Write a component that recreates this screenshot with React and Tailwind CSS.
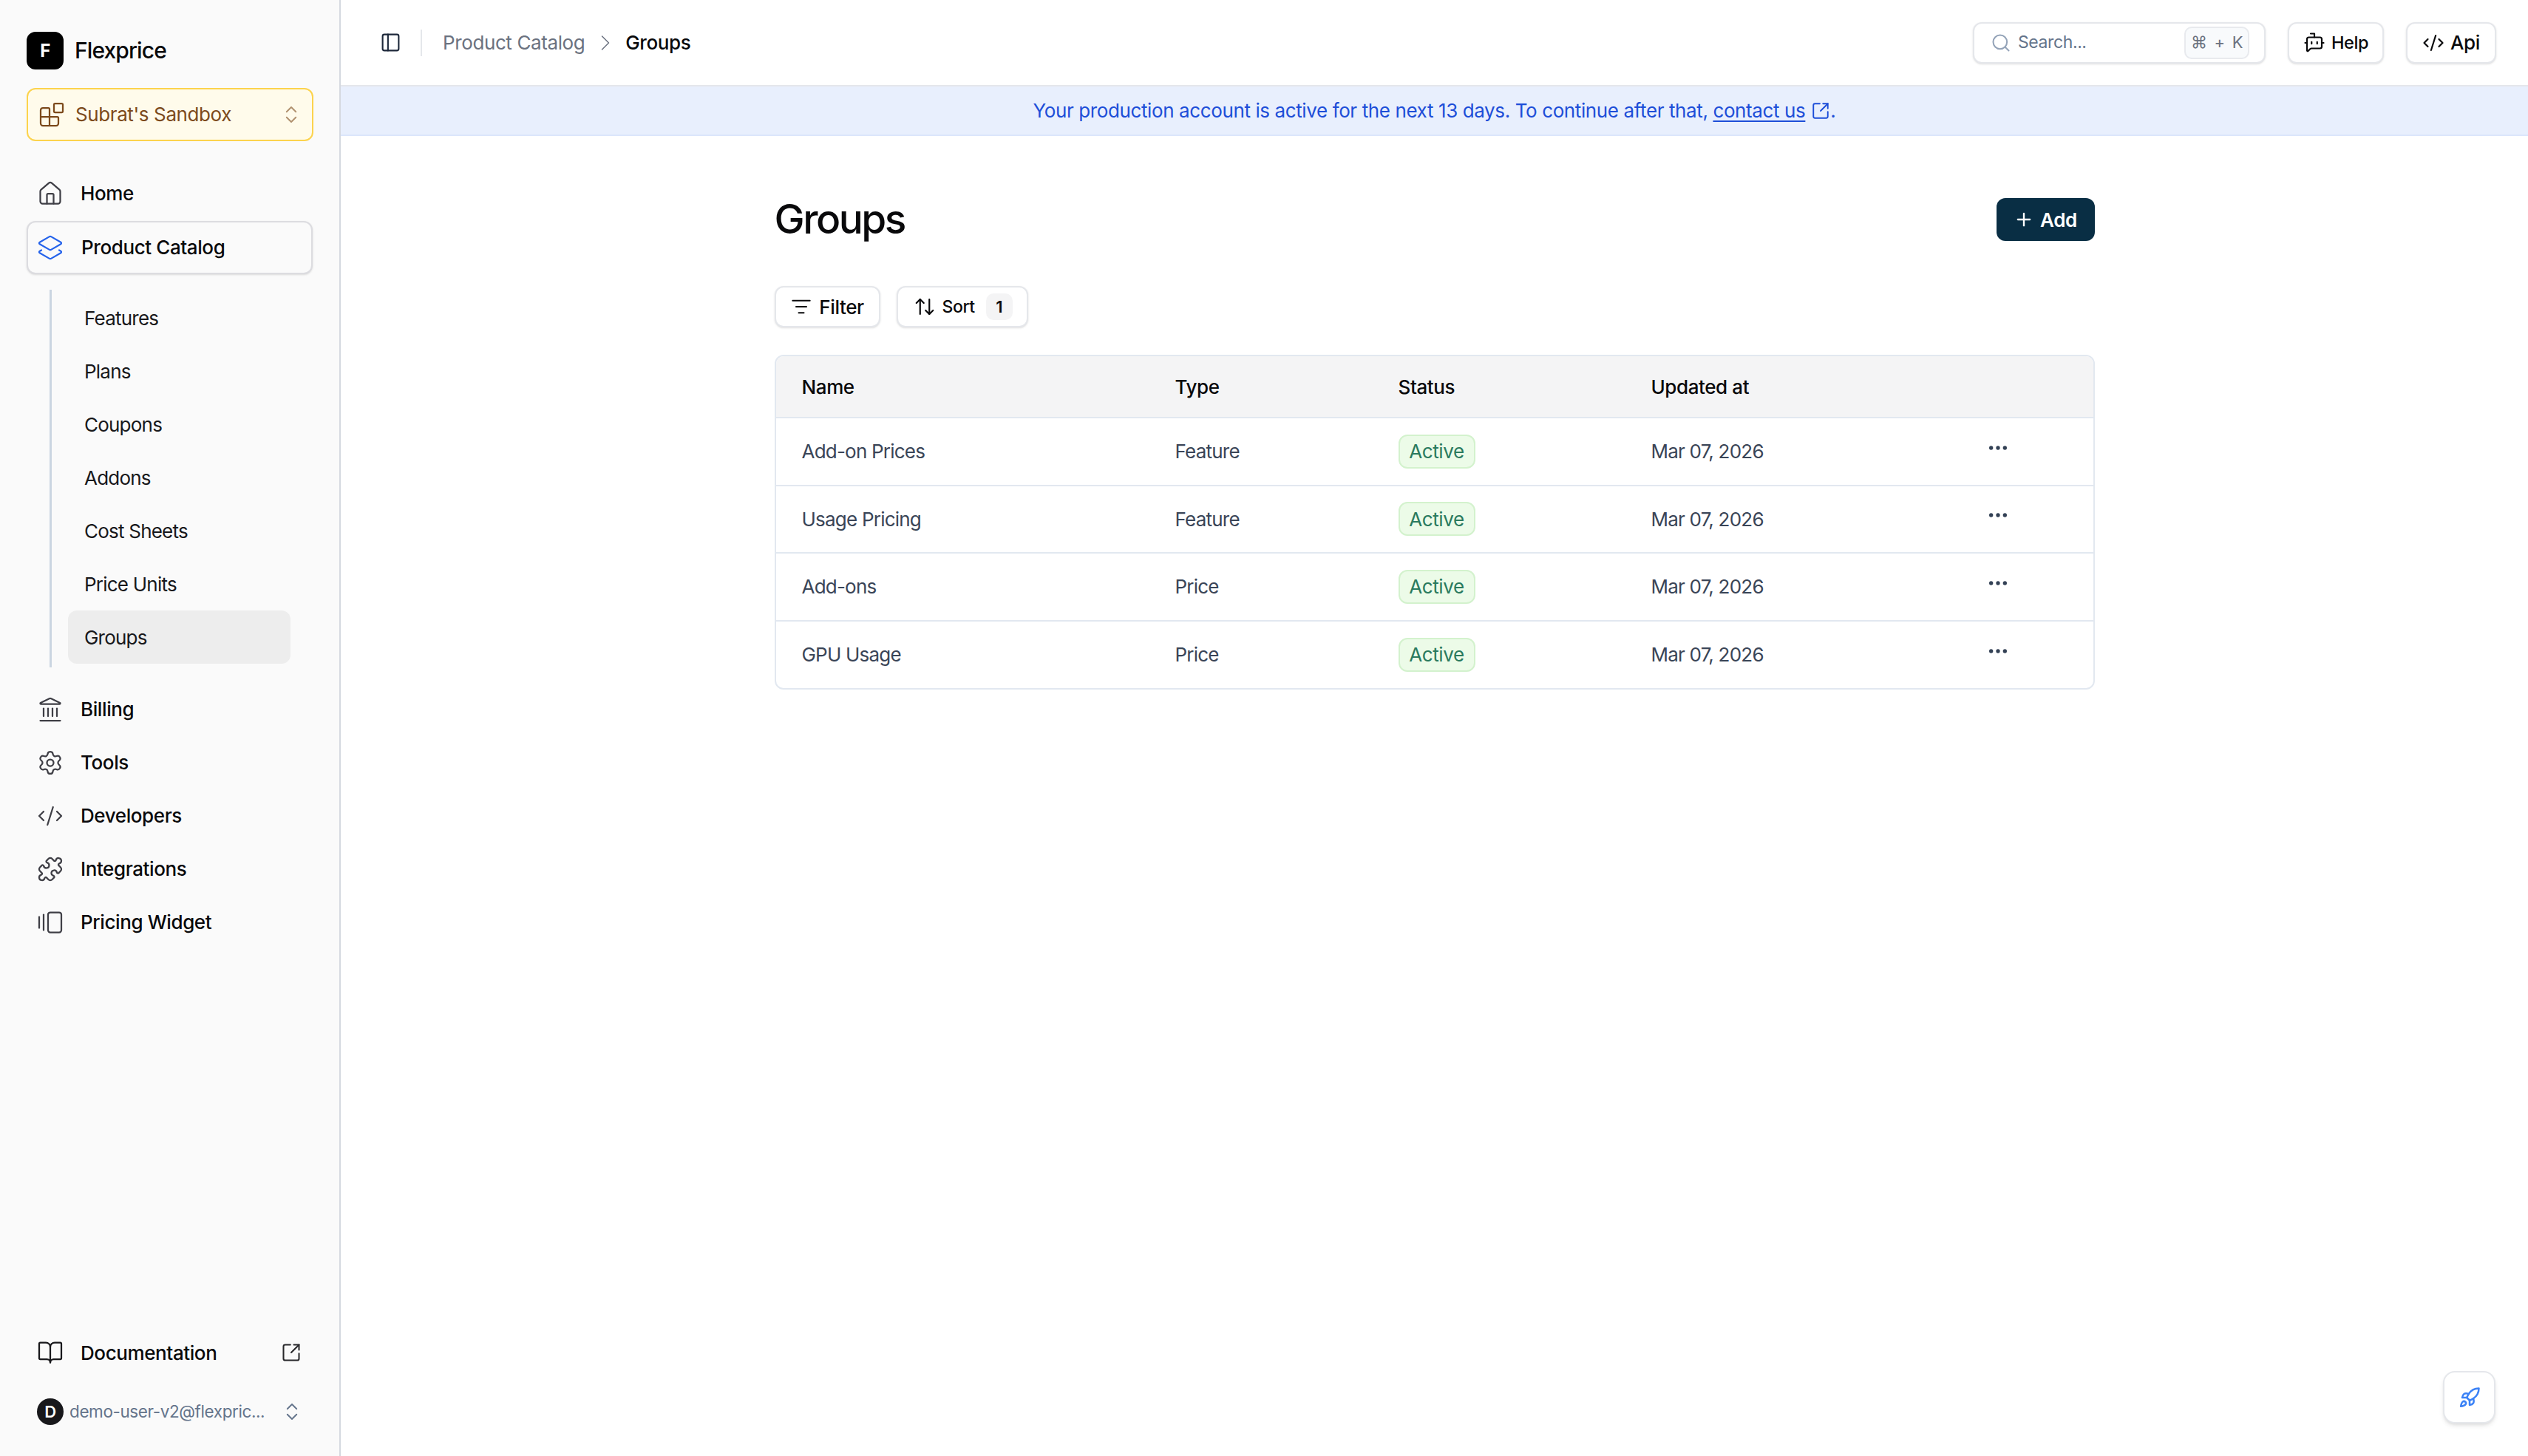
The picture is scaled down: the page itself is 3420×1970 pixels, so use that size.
import {
  ArrowUpDown,
  Blocks,
  BookOpen,
  BotMessageSquare,
  ChevronRight,
  ChevronsUpDown,
  CodeXml,
  Ellipsis,
  GalleryHorizontalEnd,
  House,
  Landmark,
  Layers2,
  ListFilter,
  PanelLeft,
  Plus,
  Puzzle,
  Rocket,
  Search,
  Settings,
  SquareArrowOutUpRight,
} from "lucide-react";

const subItems = ["Features", "Plans", "Coupons", "Addons", "Cost Sheets", "Price Units", "Groups"];

const lowerNav = [
  { label: "Billing", icon: Landmark },
  { label: "Tools", icon: Settings },
  { label: "Developers", icon: CodeXml },
  { label: "Integrations", icon: Puzzle },
  { label: "Pricing Widget", icon: GalleryHorizontalEnd },
];

const rows = [
  { name: "Add-on Prices", type: "Feature" },
  { name: "Usage Pricing", type: "Feature" },
  { name: "Add-ons", type: "Price" },
  { name: "GPU Usage", type: "Price" },
];

function NavRow({ icon: Icon, label }) {
  return (
    <div className="flex h-[72px] items-center pl-[14px]">
      <Icon size={36} strokeWidth={1.5} className="shrink-0 text-[#3f3f46]" />
      <span className="ml-[23px] pb-[2px] text-[26px] font-[450] text-[#09090b]">{label}</span>
    </div>
  );
}

function Sidebar() {
  return (
    <aside className="flex h-full w-[461px] shrink-0 flex-col border-r-2 border-[#d5d9e0] bg-[#fafafa] px-[36px] pt-[43px] pb-[34px]">
      <div className="flex h-[51px] items-center gap-[15px]">
        <div className="flex h-[51px] w-[50px] items-center justify-center rounded-[12px] bg-black text-[24px] font-bold text-white">
          F
        </div>
        <span className="text-[30px] font-medium tracking-[-0.03em] text-[#09090b]">Flexprice</span>
      </div>

      <button
        type="button"
        className="mt-[25px] flex h-[72px] w-[388px] items-center rounded-[12px] border-2 border-[#fcd34d] bg-[#fffbeb] pr-[13px] pl-[14px]"
      >
        <Blocks size={36} strokeWidth={1.5} className="shrink-0 text-[#7c4a1c]" />
        <span className="ml-[14px] flex-1 pb-[2px] text-left text-[26px] text-[#7c4a1c]">Subrat's Sandbox</span>
        <ChevronsUpDown size={30} strokeWidth={1.5} className="shrink-0 text-[#7c4a1c] opacity-60" />
      </button>

      <nav className="mt-[35px]">
        <NavRow icon={House} label="Home" />
        <div className="mt-px flex h-[72px] items-center rounded-[12px] border-2 border-[#dcdce0] bg-[#fafafa] pl-[12px] shadow-sm">
          <Layers2 size={36} strokeWidth={1.5} className="shrink-0 text-[#2563eb]" />
          <span className="ml-[24px] pb-[2px] text-[26px] font-[450] text-[#09090b]">Product Catalog</span>
        </div>

        <div className="mt-[21px] ml-[31px] h-[511px] w-[320px] border-l-[3px] border-[#cbd5e1] py-[2px] pl-[22px]">
          {subItems.map((item) => (
            <div
              key={item}
              className={`flex h-[72px] w-[301px] items-center rounded-[12px] pl-[22px] text-[26px] tracking-[-0.03em] text-[#18181b] ${
                item === "Groups" ? "bg-[#ededed]" : ""
              }`}
            >
              {item}
            </div>
          ))}
        </div>

        <div className="mt-[21px]">
          {lowerNav.map((item) => (
            <NavRow key={item.label} icon={item.icon} label={item.label} />
          ))}
        </div>
      </nav>

      <div className="mt-auto">
        <div className="flex h-[72px] items-center pl-[14px]">
          <BookOpen size={36} strokeWidth={1.5} className="shrink-0 text-[#18181b]" />
          <span className="ml-[23px] flex-1 text-[26px] font-[450] text-[#09090b]">Documentation</span>
          <SquareArrowOutUpRight size={28} strokeWidth={1.75} className="mr-[15px] text-[#27272a]" />
        </div>
        <div className="mt-[18px] flex h-[52px] items-center pl-[14px]">
          <div className="flex h-[36px] w-[36px] shrink-0 items-center justify-center rounded-full bg-[#18181b] text-[22px] font-semibold text-white">
            D
          </div>
          <span className="ml-[8px] w-[280px] whitespace-nowrap text-[22.5px] text-[#64748b]">demo-user-v2@flexpric...</span>
          <ChevronsUpDown size={30} strokeWidth={1.5} className="ml-[6px] shrink-0 text-[#64748b]" />
        </div>
      </div>
    </aside>
  );
}

function TopBar() {
  return (
    <header className="flex h-[117px] shrink-0 items-center border-b-2 border-[#e5e7eb] pr-[43px] pl-[53px]">
      <PanelLeft size={29} strokeWidth={1.75} className="text-[#1e293b]" />
      <div className="mr-[28px] ml-[26px] h-[36px] w-[2px] bg-[#e5e7eb]" />
      <span className="text-[26px] tracking-[-0.015em] text-[#6b7280]">Product Catalog</span>
      <ChevronRight size={36} strokeWidth={1} className="mr-[9px] ml-[10px] text-[#6b7280]" />
      <span className="text-[26px] font-[450] text-[#09090b]">Groups</span>

      <div className="ml-auto flex h-[56px] w-[396px] items-center rounded-[12px] border-2 border-[#e5e7eb] bg-white pr-[20px] pl-[22px] shadow-sm">
        <Search size={28} strokeWidth={1.75} className="text-[#94a3b8]" />
        <span className="ml-[9px] flex-1 text-[23px] text-[#64748b]">Search...</span>
        <span className="flex h-[44px] w-[88px] items-center justify-center gap-[10px] rounded-[10px] border-2 border-[#e8eaee] bg-[#f8fafc] text-[22px] text-[#6b7280]">
          <span>⌘</span>
          <span>+</span>
          <span>K</span>
        </span>
      </div>

      <button
        type="button"
        className="ml-[30px] flex h-[56px] w-[130px] items-center justify-center gap-[8px] rounded-[12px] border-2 border-[#e5e7eb] bg-white text-[23.5px] font-medium text-[#09090b] shadow-sm"
      >
        <BotMessageSquare size={30} strokeWidth={1.75} />
        Help
      </button>
      <button
        type="button"
        className="ml-[30px] flex h-[56px] w-[122px] items-center justify-center gap-[8px] rounded-[12px] border-2 border-[#e5e7eb] bg-white text-[26px] font-medium text-[#09090b] shadow-sm"
      >
        <CodeXml size={30} strokeWidth={1.75} />
        Api
      </button>
    </header>
  );
}

function Banner() {
  return (
    <div className="flex h-[67px] shrink-0 items-center justify-center border-b-2 border-[#dbe6fb] bg-[#e8effd] text-[26px] tracking-[-0.015em] text-[#1d4ed8]">
      <span>Your production account is active for the next 13 days. To continue after that,&nbsp;</span>
      <span className="underline underline-offset-4">contact us</span>
      <SquareArrowOutUpRight size={26} strokeWidth={1.75} className="ml-[8px]" />
      <span>.</span>
    </div>
  );
}

function GroupsTable() {
  return (
    <div className="mt-[37px] overflow-hidden rounded-[12px] border-2 border-[#e2e8f0]">
      <table className="w-full table-fixed border-collapse text-left text-[26px]">
        <thead>
          <tr className="h-[83px] bg-[#f4f4f5] text-[#09090b]">
            <th className="w-[540px] pl-[35px] font-medium">Name</th>
            <th className="w-[302px] font-medium">Type</th>
            <th className="w-[342px] font-medium">Status</th>
            <th className="font-medium">Updated at</th>
            <th className="w-[145px]" />
          </tr>
        </thead>
        <tbody className="text-[#3a4557]">
          {rows.map((row) => (
            <tr key={row.name} className="h-[91.5px] border-t-2 border-[#e2e8f0]">
              <td className="pl-[35px] tracking-[-0.03em]">{row.name}</td>
              <td className="tracking-[-0.03em]">{row.type}</td>
              <td>
                <span className="inline-flex h-[46px] w-[104px] items-center justify-center rounded-[12px] border-2 border-[#d3f2cd] bg-[#ecfbe8] text-[#2a7a5e]">
                  Active
                </span>
              </td>
              <td className="tracking-[-0.03em]">Mar 07, 2026</td>
              <td>
                <Ellipsis size={32} className="mb-[10px] text-[#334155]" />
              </td>
            </tr>
          ))}
        </tbody>
      </table>
    </div>
  );
}

export default function App() {
  return (
    <div className="relative flex h-[1970px] w-[3420px] overflow-hidden bg-white font-['Inter',sans-serif] tracking-tight">
      <Sidebar />
      <main className="flex min-w-0 flex-1 flex-col">
        <TopBar />
        <Banner />
        <section className="mx-auto w-[1786px] pt-[84px]">
          <div className="flex h-[58px] items-center justify-between">
            <h1 className="pb-[2px] text-[55px] font-medium tracking-[-0.045em] text-[#09090b]">Groups</h1>
            <button
              type="button"
              className="flex h-[58px] w-[133px] items-center justify-center gap-[8px] rounded-[12px] bg-[#092e44] text-[26px] font-semibold text-white"
            >
              <Plus size={28} strokeWidth={2} />
              Add
            </button>
          </div>

          <div className="mt-[61px] flex gap-[22px]">
            <button
              type="button"
              className="flex h-[56px] w-[143px] items-center justify-center gap-[10px] rounded-[12px] border-2 border-[#e5e7eb] bg-white pl-[1px] text-[26px] font-medium text-[#09090b] shadow-sm"
            >
              <ListFilter size={28} strokeWidth={1.75} />
              Filter
            </button>
            <button
              type="button"
              className="flex h-[56px] w-[178px] items-center rounded-[12px] border-2 border-[#e5e7eb] bg-white pl-[21px] text-[23px] font-medium text-[#09090b] shadow-sm"
            >
              <ArrowUpDown size={30} strokeWidth={1.75} />
              <span className="ml-[9px]">Sort</span>
              <span className="ml-[15px] flex h-[36px] w-[36px] items-center justify-center rounded-[10px] bg-[#f4f4f5] text-[22px] font-semibold">
                1
              </span>
            </button>
          </div>

          <GroupsTable />
        </section>
      </main>

      <button
        type="button"
        className="absolute right-[44px] bottom-[44px] flex h-[71px] w-[71px] items-center justify-center rounded-[16px] border-2 border-[#e5e7eb] bg-white shadow-md"
      >
        <Rocket size={30} strokeWidth={2} className="text-[#3b82f6]" />
      </button>
    </div>
  );
}
